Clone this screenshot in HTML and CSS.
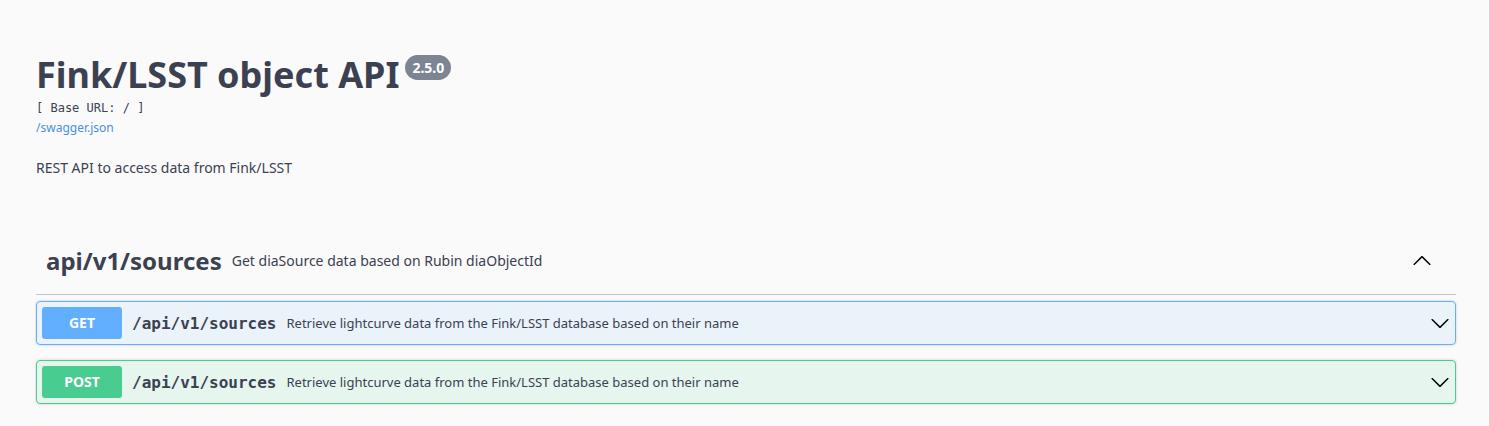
FILE: index.html
```html
<!DOCTYPE html>
<html lang="en">
<head>
<meta charset="utf-8">
<title>Fink/LSST object API</title>
<link rel="stylesheet" href="styles.css">
</head>
<body>
<div class="wrapper">
  <section class="info">
    <div class="title-row">
      <h2 class="title">Fink/LSST object API</h2><span class="version">2.5.0</span>
    </div>
    <pre class="base-url">[ Base URL: / ]</pre>
    <a class="spec-link" href="#">/swagger.json</a>
    <p class="description">REST API to access data from Fink/LSST</p>
  </section>

  <section class="tag-section">
    <div class="tag">
      <h3 class="tag-name">api/v1/sources</h3>
      <span class="tag-desc">Get diaSource data based on Rubin diaObjectId</span>
      <span class="tag-toggle">
        <svg width="20" height="20" viewBox="0 0 20 20"><path d="M17.418 14.908c.272.268.709.268.979 0s.271-.701 0-.969l-7.908-7.83c-.27-.268-.707-.268-.979 0l-7.908 7.830c-.27.268-.27.701 0 .969.271.268.709.268.979 0L10 7.767l7.418 7.141z"/></svg>
      </span>
    </div>

    <div class="opblock opblock-get">
      <span class="method">GET</span>
      <span class="path">/api/v1/sources</span>
      <span class="summary">Retrieve lightcurve data from the Fink/LSST database based on their name</span>
      <span class="op-toggle">
        <svg width="20" height="20" viewBox="0 0 20 20"><path d="M17.418 6.109c.272-.268.709-.268.979 0s.271.701 0 .969l-7.908 7.83c-.27.268-.707.268-.979 0l-7.908-7.830c-.27-.268-.27-.701 0-.969.271-.268.709-.268.979 0L10 13.25l7.418-7.141z"/></svg>
      </span>
    </div>

    <div class="opblock opblock-post">
      <span class="method">POST</span>
      <span class="path">/api/v1/sources</span>
      <span class="summary">Retrieve lightcurve data from the Fink/LSST database based on their name</span>
      <span class="op-toggle">
        <svg width="20" height="20" viewBox="0 0 20 20"><path d="M17.418 6.109c.272-.268.709-.268.979 0s.271.701 0 .969l-7.908 7.83c-.27.268-.707.268-.979 0l-7.908-7.830c-.27-.268-.27-.701 0-.969.271-.268.709-.268.979 0L10 13.25l7.418-7.141z"/></svg>
      </span>
    </div>
  </section>
</div>
</body>
</html>
```

FILE: styles.css
```css
html, body {
  margin: 0;
  padding: 0;
  background: #fafafa;
}

body {
  font-family: "Noto Sans", "Open Sans", sans-serif;
  color: #3b4151;
}

.wrapper {
  padding: 0 33px 0 36px;
}

.info {
  padding-top: 50px;
}

.title-row {
  display: flex;
  align-items: flex-start;
}

.title {
  margin: 0;
  font-size: 36px;
  font-weight: 700;
  line-height: 49px;
  color: #3b4151;
}

.version {
  margin: 5px 0 0 6px;
  background: #7d8492;
  color: #fff;
  border-radius: 57px;
  font-size: 14px;
  font-weight: 700;
  line-height: 19px;
  padding: 3px 7px;
}

.base-url {
  margin: 2px 0 0;
  font-family: "DejaVu Sans Mono", monospace;
  font-size: 12px;
  line-height: 14px;
  color: #3b4151;
}

.spec-link {
  display: block;
  margin-top: 5px;
  font-size: 12px;
  line-height: 16px;
  color: #4990e2;
  text-decoration: none;
}

.description {
  margin: 22px 0 0;
  font-size: 14px;
  line-height: 19px;
}

.tag-section {
  margin-top: 48px;
}

.tag {
  display: flex;
  align-items: center;
  height: 50px;
  padding: 10px 24px 9px 10px;
  border-bottom: 1px solid rgba(59, 65, 81, 0.3);
  margin-bottom: 6px;
}

.tag-name {
  margin: 0 10px 0 0;
  font-size: 24px;
  font-weight: 700;
  line-height: 33px;
}

.tag-desc {
  font-size: 14px;
  line-height: 19px;
  flex: 1;
}

.tag-toggle,
.op-toggle {
  display: flex;
  fill: #000;
}

.opblock {
  display: flex;
  align-items: center;
  height: 32px;
  padding: 5px;
  border: 1px solid;
  border-radius: 4px;
  box-shadow: 0 0 3px rgba(0, 0, 0, 0.19);
  margin-bottom: 15px;
}

.opblock-get {
  border-color: #61affe;
  background: rgba(97, 175, 254, 0.1);
}

.opblock-post {
  border-color: #49cc90;
  background: rgba(73, 204, 144, 0.1);
}

.method {
  min-width: 80px;
  text-align: center;
  font-size: 14px;
  font-weight: 700;
  line-height: 20px;
  padding: 6px 0;
  border-radius: 3px;
  color: #fff;
}

.opblock-get .method {
  background: #61affe;
}

.opblock-post .method {
  background: #49cc90;
}

.path {
  padding: 0 10px;
  font-family: "DejaVu Sans Mono", monospace;
  font-size: 16px;
  font-weight: 700;
}

.summary {
  flex: 1;
  font-size: 13px;
}
```
